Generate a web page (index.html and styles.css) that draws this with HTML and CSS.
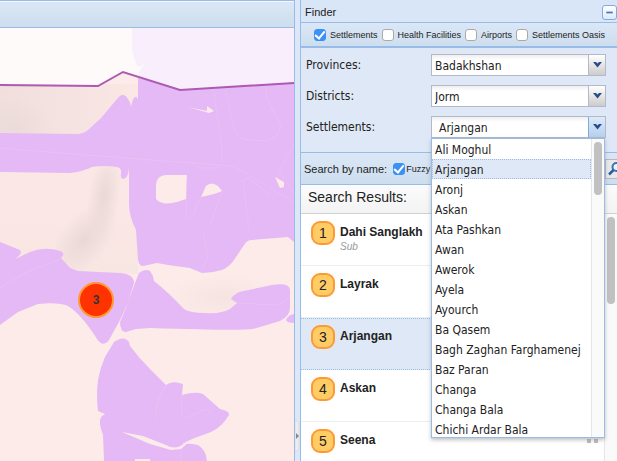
FILE: index.html
```html
<!DOCTYPE html>
<html lang="en">
<head>
<meta charset="utf-8">
<title>Settlement Finder</title>
<link rel="stylesheet" href="styles.css">
</head>
<body>
<main class="viewport">
  <section class="map-panel" aria-label="Map">
    <div class="map-bar"></div>
    <svg class="map" viewBox="0 28 294 433" preserveAspectRatio="xMinYMin slice">
      <defs>
        <linearGradient id="haze" x1="0" y1="0" x2="1" y2="0">
          <stop offset="0" stop-color="#f0dfdd"/><stop offset=".5" stop-color="#f5e3e1"/><stop offset="1" stop-color="#fbe7e4"/>
        </linearGradient>
        <linearGradient id="slope" x1="0" y1="0" x2="0" y2="1">
          <stop offset="0" stop-color="#fbe8e6"/><stop offset=".5" stop-color="#fbe7e5"/><stop offset="1" stop-color="#f7e6e2"/>
        </linearGradient>
        <radialGradient id="hill"><stop offset="0" stop-color="#e8d8d7"/><stop offset="1" stop-color="#e8d8d7" stop-opacity="0"/></radialGradient>
      </defs>
      <rect y="28" width="294" height="433" fill="#fdebe9"/>
      <rect y="84" width="138" height="52" fill="url(#haze)"/>
      <rect y="165" width="138" height="109" fill="url(#slope)"/>
      <ellipse cx="104" cy="196" rx="16" ry="44" fill="url(#hill)" transform="rotate(8 104 196)"/>
      <ellipse cx="84" cy="240" rx="24" ry="44" fill="url(#hill)" transform="rotate(40 84 240)"/>
      <ellipse cx="225" cy="298" rx="60" ry="24" fill="url(#hill)" opacity=".4"/>
      <ellipse cx="14" cy="128" rx="38" ry="30" fill="url(#hill)" opacity=".7"/>
      <g class="zone">
        <path d="M0 133L77 134Q83 134 88 130L101 118L117 99Q123 91 128 99Q131 103 131 107Q134 92 138 99V78L147 79L180 90L294 83V242L288 237L252 240Q247 240 244 245L236 257Q230 267 222 270Q212 273 202 273L190 268L168 265L157 263L143 266Q139 266 138 260L136 230Q129 216 129 204V168Q128 179 123 179Q120 178 121 174Q122 168 117 167Q105 165 92 167Q82 172 70 173L0 172Z"/>
        <path d="M0 242L20 250Q23 254 15 259L30 252Q45 246 60 251Q66 253 61 258L70 268L78 271L120 273Q134 274 134 283L128 303L120 320L109 340Q103 348 97 339Q80 312 66 305Q55 302 38 304L18 312L0 325Z"/>
        <path d="M139 273Q145 268 150 271L153 276L154 281Q168 292 184 309Q190 313 205 313Q222 314 230 309L237 303L231 299Q232 296 239 292L272 285Q290 282 290 290V308Q290 316 280 321L253 329Q240 331 150 328L136 329L126 332Q120 332 120 322L126 308L135 283Z"/>
        <path d="M286 320Q288 315 294 314V323Q287 323 286 320Z"/>
        <path d="M114 342Q124 335 129 342L130 346Q139 358 150 369L166 385Q172 380 183 384L182 395Q195 391 203 394L220 409Q230 411 229 415Q222 427 211 432L192 439L182 444Q190 443 198 445Q206 450 207 461H150V459H135V461H104L103 435Q98 422 101 417L105 414L98 411Q96 395 98 380Q100 368 105 357Z"/>
      </g>
      <g class="gap">
        <path d="M156 199V185Q157 175 166 175H187L186 199L177 202Q162 206 156 199Z"/>
        <path d="M201 197L206 186Q211 181 218 186L222 191Q216 194 201 197Z"/>
        <path d="M275 177L284 182V187L280 188Z"/>
        <path d="M188 107L207 111V106L214 111L209 113Z"/>
        <path d="M122 432L143 436L166 445Q175 450 182 445L191 440L181 449L171 450L150 444Z"/>
      </g>
      <g class="seam">
        <path d="M0 148L50 152L150 160L233 166L294 202M0 288L25 273L62 258M213 87L222 148V162M225 87L234 130Q237 139 250 140L268 141L277 135L281 126L266 98V84M191 162L201 168L220 168M187 175L186 216Q192 225 196 207L201 197M222 191L210 225M249 230L243 180L248 178L270 195M294 145L279 171L293 192M203 230L208 258L201 271M182 395Q180 417 185 418L206 409L213 415M166 385Q155 402 156 418M181 449V461M237 303L275 305Q285 304 290 295"/>
      </g>
      <path d="M0 28H294V83L180 90L123 72L98 86L0 85Z" fill="#fdfaf9"/>
      <path d="M132 28H294V83L180 90L138 77Q139 68 146 64L138 67Q133 57 132 50Z" fill="#f8eefc"/>
      <path class="border-line" d="M0 85L98 86L123 72L180 90L294 83"/>
      <circle cx="96" cy="300" r="17" fill="#f30" stroke="#f93" stroke-width="2"/>
      <text class="marker" x="96" y="304">3</text>
    </svg>
  </section>

  <div class="splitter"><button class="collapse" type="button" aria-label="Collapse panel"><svg viewBox="0 0 5 34"><path d="M0 0L4 4V30L0 34Z" fill="#ecedf0" stroke="#c8ccd2" stroke-width=".5"/><path d="M1 14L4 17L1 20Z" fill="#888"/></svg></button></div>

  <aside class="finder">
    <header class="title-bar">
      <h1>Finder</h1>
      <button class="minimize" type="button" aria-label="Minimize"><svg viewBox="0 0 12 12"><path d="M3 6H9" stroke="#4d78a8" stroke-width="1.6"/></svg></button>
    </header>

    <div class="layers">
      <label><input type="checkbox" checked>Settlements</label>
      <label><input type="checkbox">Health Facilities</label>
      <label><input type="checkbox">Airports</label>
      <label><input type="checkbox">Settlements Oasis</label>
    </div>

    <form class="filters">
      <label for="province">Provinces:</label>
      <div class="combo">
        <select id="province"><option>Badakhshan</option></select>
        <span class="trigger"><svg viewBox="0 0 9 6"><path d="M0 0H3L4.500 1.500L6 0H9L4.500 5.500Z"/></svg></span>
      </div>
      <label for="district">Districts:</label>
      <div class="combo">
        <select id="district"><option>Jorm</option></select>
        <span class="trigger"><svg viewBox="0 0 9 6"><path d="M0 0H3L4.500 1.500L6 0H9L4.500 5.500Z"/></svg></span>
      </div>
      <label for="settlement">Settlements:</label>
      <div class="combo open">
        <input id="settlement" type="text" value="Arjangan">
        <button class="trigger" type="button" aria-label="Show settlements"><svg viewBox="0 0 9 6"><path d="M0 0H3L4.500 1.500L6 0H9L4.500 5.500Z"/></svg></button>
        <div class="menu">
          <ul role="listbox" aria-label="Settlements">
            <li role="option">Ali Moghul</li>
            <li role="option" class="selected" aria-selected="true">Arjangan</li>
            <li role="option">Aronj</li>
            <li role="option">Askan</li>
            <li role="option">Ata Pashkan</li>
            <li role="option">Awan</li>
            <li role="option">Awerok</li>
            <li role="option">Ayela</li>
            <li role="option">Ayourch</li>
            <li role="option">Ba Qasem</li>
            <li role="option">Bagh Zaghan Farghamenej</li>
            <li role="option">Baz Paran</li>
            <li role="option">Changa</li>
            <li role="option">Changa Bala</li>
            <li role="option">Chichi Ardar Bala</li>
          </ul>
          <div class="track"><div class="thumb short"></div></div>
        </div>
      </div>
    </form>

    <div class="search">
      <span>Search by name:</span>
      <label><input type="checkbox" checked>Fuzzy</label>
      <button class="go" type="button" aria-label="Search"><svg viewBox="0 0 16 16"><circle cx="9.500" cy="6" r="4" fill="#eaf4ff" stroke="#3973b8" stroke-width="2"/><path d="M6.500 9L2 13.500" stroke="#2c5d9e" stroke-width="2.500"/></svg></button>
    </div>

    <section class="results">
      <h2>Search Results:</h2>
      <div class="scroller">
        <ol>
          <li><span class="badge">1</span><div><h3>Dahi Sanglakh</h3><p>Sub</p></div></li>
          <li><span class="badge">2</span><div><h3>Layrak</h3></div></li>
          <li class="selected"><span class="badge">3</span><div><h3>Arjangan</h3></div></li>
          <li><span class="badge">4</span><div><h3>Askan</h3></div></li>
          <li><span class="badge">5</span><div><h3>Seena</h3></div><span class="grip"></span></li>
        </ol>
        <div class="track"><div class="thumb"></div></div>
      </div>
    </section>
  </aside>
</main>
</body>
</html>
```
FILE: styles.css
```css
* { box-sizing: border-box; }

body {
  margin: 0;
  overflow: hidden;
  color: #222;
  font: 12px/20px "Liberation Sans", Arial, sans-serif;
}

h1, h2, h3, p, ul, ol { margin: 0; padding: 0; font-weight: normal; }
ul, ol { list-style: none; }
button { padding: 0; border: 0; }
svg { display: block; }

.viewport {
  display: flex;
  height: 100vh;
  background: #dfe8f6;
}

/* Map */
.map-panel {
  display: flex;
  flex: 1;
  flex-direction: column;
  min-width: 0;
  border-right: 1px solid #99bbe8;
}
.map-bar {
  flex: none;
  height: 28px;
  border: solid #99bbe8;
  border-width: 1px 0;
  background: linear-gradient(#dbe7f6, #cddeee);
  box-shadow: inset 0 1px #f2f7fd;
}
.map { flex: 1; width: 100%; min-height: 0; }
.zone { fill: #e5b9f5; }
.gap { fill: #fdebe9; }
.seam { fill: none; stroke: #edc6f1; stroke-width: 0.5; }
.border-line { fill: none; stroke: #ae59b2; stroke-width: 2; }
.marker { fill: #333; font-weight: bold; text-anchor: middle; }

.splitter {
  display: flex;
  flex: 0 0 5px;
  align-items: flex-end;
  padding-bottom: 8px;
  background: #dce8f7;
}
.collapse { width: 5px; height: 34px; background: none; }

/* Finder */
.finder {
  display: flex;
  flex: 0 0 317px;
  flex-direction: column;
  border-left: 1px solid #99bbe8;
}
.title-bar {
  display: flex;
  align-items: center;
  justify-content: space-between;
  height: 23px;
  padding: 2px 0 0 4px;
  border-bottom: 1px solid #99bbe8;
  background: #d9e6f7;
}
.title-bar h1 { font-size: 11px; }
.minimize {
  width: 15px;
  height: 15px;
  border: 1px solid #7eaee0;
  border-radius: 3px;
  background: linear-gradient(#fff, #dceafa);
}

.layers {
  display: flex;
  align-items: center;
  gap: 4px;
  height: 25px;
  padding: 1px 0 0 13px;
  border-bottom: 2px solid #99bbe8;
  background: linear-gradient(#dbe7f6, #cddeee);
}
.layers label, .search label {
  display: flex;
  align-items: center;
  gap: 4px;
  font-size: 9px;
  white-space: nowrap;
}
input[type="checkbox"] {
  width: 12px;
  height: 12px;
  margin: 0;
  appearance: none;
  border: 1px solid #aaa;
  border-radius: 3px;
  background: #fff;
}
input[type="checkbox"]:checked {
  display: grid;
  place-items: center;
  border-color: #3b91f5;
  background: #3b91f5;
}
input[type="checkbox"]:checked::before {
  width: 4px;
  height: 8px;
  margin-top: -2px;
  border: solid #fff;
  border-width: 0 2px 2px 0;
  content: "";
  transform: rotate(40deg);
}

.filters {
  display: grid;
  grid-template-columns: 125px 1fr;
  align-content: start;
  row-gap: 9px;
  height: 105px;
  padding: 6px 11px 0 5px;
  border-bottom: 1px solid #99bbe8;
  background: #dfe8f6;
  font: 12px/22px "DejaVu Sans Condensed", "Noto Sans", sans-serif;
}
.combo {
  position: relative;
  display: flex;
  height: 22px;
  border: 1px solid #b5b8c8;
  background: linear-gradient(#eee, #fff 5px);
}
.combo select, .combo input {
  flex: 1;
  min-width: 0;
  padding: 2px 3px 0;
  appearance: none;
  border: 0;
  outline: 0;
  background: none;
  color: #222;
  font: inherit;
  line-height: 18px;
}
.combo input { padding-left: 7px; }
.trigger {
  display: grid;
  place-items: center;
  width: 17px;
  border-left: 1px solid #b5b8c8;
  background: linear-gradient(#fff, #ccc);
  pointer-events: none;
}
.trigger svg { width: 9px; height: 6px; fill: #284b8c; }
.open .trigger {
  border-color: #7eadd9;
  background: linear-gradient(#dcebfa, #b5d0ee);
}

.menu {
  position: absolute;
  z-index: 2;
  top: 21px;
  left: -1px;
  display: flex;
  width: calc(100% + 1px);
  height: 300px;
  overflow: hidden;
  border: 1px solid #99bbe8;
  background: #fff;
  box-shadow: 0 2px 4px #8888;
}
.menu ul { flex: 1; }
.menu li {
  height: 20px;
  padding: 0 2px;
  border: 1px solid #fff;
  line-height: 20px;
}
.menu .selected {
  border: 1px dotted #a3bae9;
  background: #dfe8f6;
}
.track {
  flex: 0 0 13px;
  padding: 3px 2px;
  border-left: 1px solid #e6e6e6;
  background: #fafafa;
}
.thumb {
  width: 8px;
  height: 87px;
  border-radius: 4px;
  background: #c1c1c1;
}
.thumb.short { height: 53px; }

.search {
  display: flex;
  align-items: center;
  height: 32px;
  padding-left: 3px;
  border-bottom: 1px solid #99bbe8;
  background: linear-gradient(#dbe7f6, #cddeee);
  font-size: 11px;
}
.search label { gap: 1px; margin-left: 6px; }
.go {
  display: grid;
  place-items: center;
  width: 20px;
  height: 20px;
  margin-left: auto;
  margin-right: -8px;
  border: 1px solid #b5b8c8;
  background: #e8e8e8;
}
.go svg { width: 16px; height: 16px; }

/* Results */
.results {
  display: flex;
  flex: 1;
  flex-direction: column;
  min-height: 0;
  background: #fff;
}
.results h2 {
  height: 29px;
  padding-left: 7px;
  border-bottom: 1px solid #d0d0d0;
  background: linear-gradient(#fbfbfb, #f3f3f3);
  font-size: 14px;
  line-height: 24px;
}
.scroller {
  display: flex;
  flex: 1;
  min-height: 0;
  overflow: hidden;
}
.scroller ol { flex: 1; }
.scroller li {
  display: flex;
  gap: 5px;
  height: 52px;
  padding: 7px 10px;
  border-bottom: 1px solid #ededed;
}
.scroller .selected {
  padding-top: 6px;
  border: 1px dotted #99bbe8;
  border-width: 1px 0;
  background: #dfe8f6;
}
.badge {
  width: 24px;
  height: 24px;
  border: 2px solid #f93;
  border-radius: 9px;
  background: #fc6;
  font-size: 14px;
  text-align: center;
}
h3 { font-size: 12px; font-weight: bold; line-height: 22px; }
.scroller p { color: #999; font-size: 10px; font-style: italic; line-height: 8px; }
.grip {
  width: 11px;
  height: 4px;
  margin-top: 10px;
  margin-right: -4px;
  margin-left: auto;
  border: solid #bbb;
  border-width: 0 4px;
}
```
